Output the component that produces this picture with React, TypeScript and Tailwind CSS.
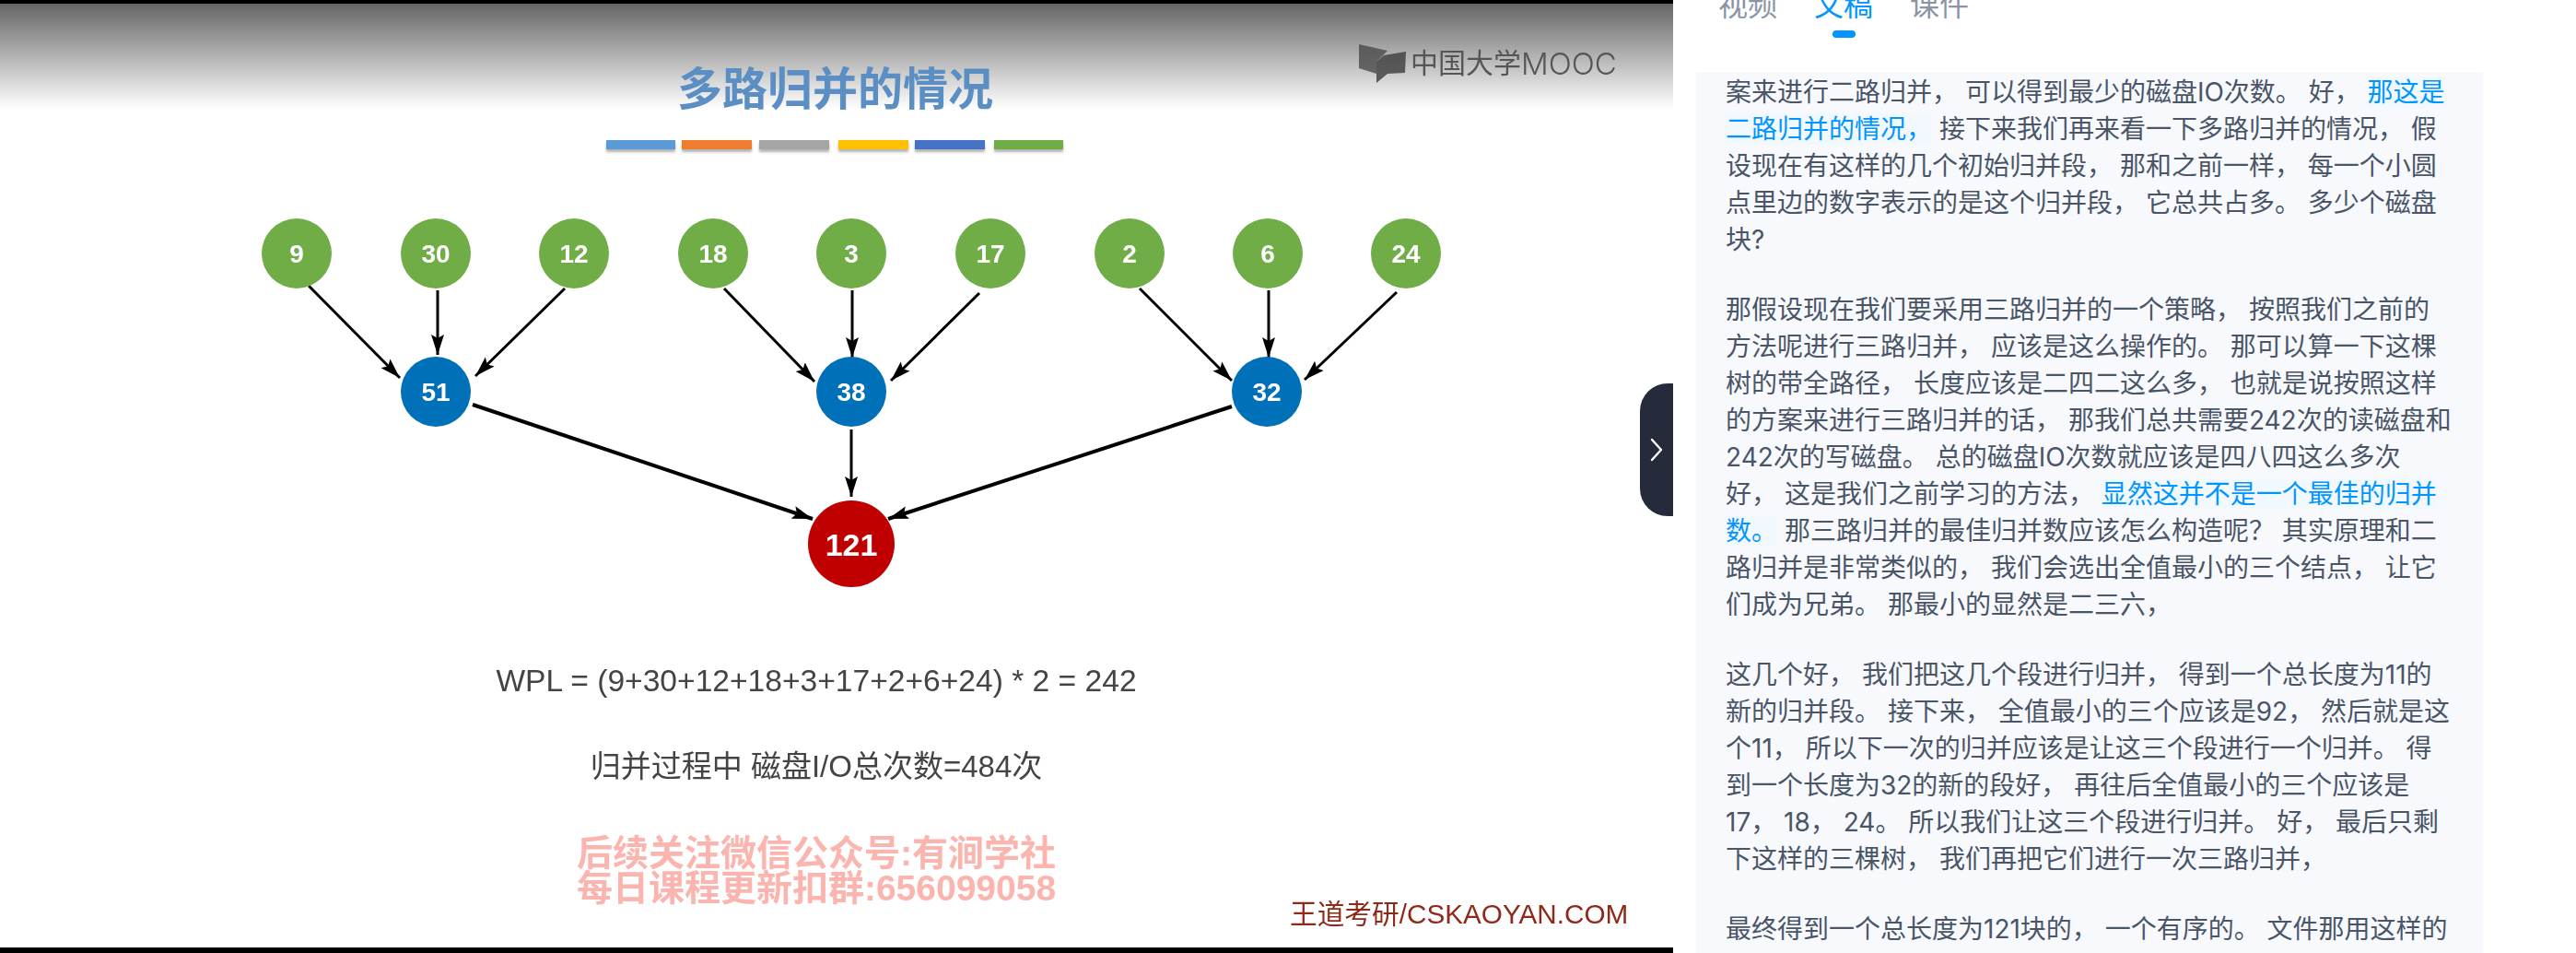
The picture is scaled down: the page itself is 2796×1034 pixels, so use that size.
import React from "react";

type Seg = { t: string; blue?: boolean };

const paragraphs: Seg[][][] = [
  [
    [{ t: "案来进行二路归并， 可以得到最少的磁盘IO次数。 好， " }, { t: "那这是", blue: true }],
    [{ t: "二路归并的情况，", blue: true }, { t: " 接下来我们再来看一下多路归并的情况， 假" }],
    [{ t: "设现在有这样的几个初始归并段， 那和之前一样， 每一个小圆" }],
    [{ t: "点里边的数字表示的是这个归并段， 它总共占多。 多少个磁盘" }],
    [{ t: "块?" }],
  ],
  [
    [{ t: "那假设现在我们要采用三路归并的一个策略， 按照我们之前的" }],
    [{ t: "方法呢进行三路归并， 应该是这么操作的。 那可以算一下这棵" }],
    [{ t: "树的带全路径， 长度应该是二四二这么多， 也就是说按照这样" }],
    [{ t: "的方案来进行三路归并的话， 那我们总共需要242次的读磁盘和" }],
    [{ t: "242次的写磁盘。 总的磁盘IO次数就应该是四八四这么多次" }],
    [{ t: "好， 这是我们之前学习的方法， " }, { t: "显然这并不是一个最佳的归并", blue: true }],
    [{ t: "数。", blue: true }, { t: " 那三路归并的最佳归并数应该怎么构造呢？ 其实原理和二" }],
    [{ t: "路归并是非常类似的， 我们会选出全值最小的三个结点， 让它" }],
    [{ t: "们成为兄弟。 那最小的显然是二三六，" }],
  ],
  [
    [{ t: "这几个好， 我们把这几个段进行归并， 得到一个总长度为11的" }],
    [{ t: "新的归并段。 接下来， 全值最小的三个应该是92， 然后就是这" }],
    [{ t: "个11， 所以下一次的归并应该是让这三个段进行一个归并。 得" }],
    [{ t: "到一个长度为32的新的段好， 再往后全值最小的三个应该是" }],
    [{ t: "17， 18， 24。 所以我们让这三个段进行归并。 好， 最后只剩" }],
    [{ t: "下这样的三棵树， 我们再把它们进行一次三路归并，" }],
  ],
  [[{ t: "最终得到一个总长度为121块的， 一个有序的。 文件那用这样的" }]],
];

const bars = [
  { w: "w-[75px]", c: "bg-[#5b9bd5]", m: "" },
  { w: "w-[76px]", c: "bg-[#ed7d31]", m: "ml-[7px]" },
  { w: "w-[76px]", c: "bg-[#a5a5a5]", m: "ml-[8px]" },
  { w: "w-[76px]", c: "bg-[#ffc000]", m: "ml-[10px]" },
  { w: "w-[76px]", c: "bg-[#4472c4]", m: "ml-[7px]" },
  { w: "w-[75px]", c: "bg-[#70ad47]", m: "ml-[10px]" },
];

const leaves = [
  [322, "9"], [473, "30"], [623, "12"], [774, "18"], [924, "3"],
  [1075, "17"], [1226, "2"], [1376, "6"], [1526, "24"],
] as const;

const mids = [[473, "51"], [924, "38"], [1375, "32"]] as const;

// arrows in page coordinates, the svg starts at y=230
const thinArrows = [
  [335, 310, 434, 410], [475, 315, 475, 385], [613, 313, 516, 408],
  [786, 313, 884, 414], [925, 315, 925, 388], [1063, 318, 967, 413],
  [1237, 313, 1337, 413], [1377, 315, 1377, 388], [1516, 317, 1416, 412],
];
const thickArrows = [
  [513, 439, 882, 563], [924, 466, 924, 539], [1337, 441, 964, 563],
];

const Diagram = () => (
  <svg width={1816} height={410} viewBox="0 230 1816 410" className="block mt-[68px]">
    <defs>
      <marker id="head" markerUnits="userSpaceOnUse" markerWidth="24" markerHeight="16" refX="22" refY="8" orient="auto">
        <path d="M0 1 L22 8 L0 15 L4 8 Z" fill="#000" />
      </marker>
    </defs>
    {thinArrows.map((a, i) => (
      <line key={i} x1={a[0]} y1={a[1]} x2={a[2]} y2={a[3]} stroke="#000" strokeWidth={3} markerEnd="url(#head)" />
    ))}
    {thickArrows.map((a, i) => (
      <line key={i} x1={a[0]} y1={a[1]} x2={a[2]} y2={a[3]} stroke="#000" strokeWidth={a[0] === a[2] ? 3 : 4} markerEnd="url(#head)" />
    ))}
    {leaves.map(([x, n]) => (
      <g key={n}>
        <circle cx={x} cy={275} r={38} fill="#70ad47" />
        <text x={x} y={285} textAnchor="middle" fill="#fff" fontSize={28} fontWeight={700} fontFamily="'Liberation Sans', sans-serif">{n}</text>
      </g>
    ))}
    {mids.map(([x, n]) => (
      <g key={n}>
        <circle cx={x} cy={425} r={38} fill="#0070b8" />
        <text x={x} y={435} textAnchor="middle" fill="#fff" fontSize={28} fontWeight={700} fontFamily="'Liberation Sans', sans-serif">{n}</text>
      </g>
    ))}
    <circle cx={924} cy={590} r={47} fill="#c00000" />
    <text x={924} y={603} textAnchor="middle" fill="#fff" fontSize={34} fontWeight={700} fontFamily="'Liberation Sans', sans-serif">121</text>
  </svg>
);

export default function App() {
  return (
    <div className="flex w-[2796px] h-[1034px] overflow-hidden bg-white font-['Liberation_Sans','Noto_Sans_CJK_SC',sans-serif]">
      {/* Video */}
      <div className="relative flex flex-col w-[1816px] h-full shrink-0">
        <div className="h-[4px] bg-black shrink-0" />
        <div className="flex-1 flex flex-col bg-[linear-gradient(#666666,#ffffff_114px)] blur-[0.7px]">
          <div className="flex items-start h-[121px]">
            <div className="ml-[735px] mt-[69px] text-[49px] leading-[48px] font-bold text-[#5b8fc4] whitespace-nowrap">
              多路归并的情况
            </div>
            {/* MOOC logo */}
            <div className="flex items-center ml-[397px] mt-[43px]">
              <svg width={56} height={44} viewBox="0 0 56 44" className="shrink-0">
                <path d="M0 1 L31 8 L19 20 L19 33 L0 27 Z" fill="#4a4a4a" fillOpacity={0.8} />
                <path d="M19 20 L27 13 L51 9 L50 32 L31 33 L19 43 Z" fill="#3c3c3c" fillOpacity={0.8} />
              </svg>
              <span className="text-[30px] leading-[40px] text-[#555555] whitespace-nowrap">中国大学</span>
              <span className="font-['Inter'] font-light text-[33px] leading-[40px] text-[#555555] whitespace-nowrap">MOOC</span>
            </div>
          </div>
          <div className="flex ml-[658px] mt-[27px]">
            {bars.map((b) => (
              <div key={b.c} className={`h-[10px] shadow-[0_3px_3px_rgba(0,0,0,0.3)] ${b.w} ${b.c} ${b.m}`} />
            ))}
          </div>
          <Diagram />
          <div className="mt-[79px] text-center w-[1772px] text-[33.6px] leading-[40px] text-[#444444]">
            WPL = (9+30+12+18+3+17+2+6+24) * 2 = 242
          </div>
          <div className="mt-[53px] text-center w-[1772px] text-[33px] leading-[40px] text-[#444444]">
            归并过程中 磁盘I/O总次数=484次
          </div>
          <div className="mt-[55px] text-center w-[1772px] text-[39px] leading-[38px] font-bold text-[#fbb4ae]">
            <div>后续关注微信公众号:有涧学社</div>
            <div>每日课程更新扣群:656099058</div>
          </div>
          <div className="ml-[1400px] -mt-[7px] text-[29.7px] leading-[32px] text-[#8f2a18] whitespace-nowrap">
            王道考研/CSKAOYAN.COM
          </div>
        </div>
        <div className="h-[6px] bg-black shrink-0" />
        {/* collapse handle */}
        <div className="absolute top-[416px] right-0 flex items-center justify-center w-[36px] h-[144px] rounded-l-[30px] bg-[#252b3a]">
          <svg width={14} height={26} viewBox="0 0 14 26" fill="none">
            <path d="M2 2 L12 13 L2 24" stroke="#fff" strokeWidth={2.4} strokeLinecap="round" strokeLinejoin="round" />
          </svg>
        </div>
      </div>

      {/* Right side */}
      <div className="flex flex-col flex-1 min-w-0 font-['Inter','Noto_Sans_CJK_SC',sans-serif]">
        <div className="flex h-[88px] shrink-0 gap-[40px] pl-[49px] -mt-[10px] text-[32px] leading-[32px] text-[#8a94a6]">
          <span>视频</span>
          <div className="flex flex-col items-center text-[#0095ff]">
            <span>文稿</span>
            <div className="mt-[11px] w-[25px] h-[8px] rounded-full bg-[#0095ff]" />
          </div>
          <span>课件</span>
        </div>
        <div className="ml-[25px] w-[854px] flex-1 pl-[32px] pt-[2px] bg-[#f7f9fd] text-[28px] leading-[40px] text-[#4a5568] overflow-hidden">
          {paragraphs.map((p, i) => (
            <div key={i} className="mb-[36px]">
              {p.map((line, j) => (
                <div key={j} className="whitespace-pre">
                  {line.map((s, k) =>
                    s.blue ? (
                      <span key={k} className="text-[#0095ff] bg-[#f1f8fe]">{s.t}</span>
                    ) : (
                      <span key={k}>{s.t}</span>
                    )
                  )}
                </div>
              ))}
            </div>
          ))}
        </div>
      </div>
    </div>
  );
}
